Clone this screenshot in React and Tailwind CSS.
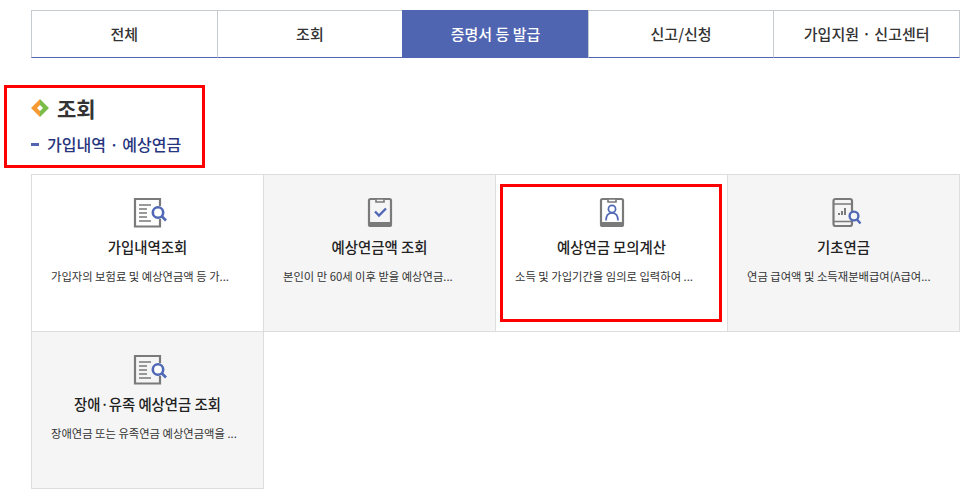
import React from 'react';

const TABS = ['전체', '조회', '증명서 등 발급', '신고/신청', '가입지원 · 신고센터'];

const CARDS = [
  { title: '가입내역조회', desc: '가입자의 보험료 및 예상연금액 등 가...', icon: 'doc' },
  { title: '예상연금액 조회', desc: '본인이 만 60세 이후 받을 예상연금...', icon: 'check' },
  { title: '예상연금 모의계산', desc: '소득 및 가입기간을 임의로 입력하여 ...', icon: 'person' },
  { title: '기초연금', desc: '연금 급여액 및 소득재분배급여(A급여...', icon: 'phone' },
  { title: '장애·유족 예상연금 조회', desc: '장애연금 또는 유족연금 예상연금액을 ...', icon: 'doc' },
];

function CardIcon({ type }) {
  const gray = '#7a7a7a';
  const blue = '#5068b5';
  return (
    <svg width="36" height="32" viewBox="0 0 36 32" fill="none" className="overflow-visible">
      {type === 'doc' && (
        <>
          <path d="M30 23v7.5H5V3h25v7" stroke={gray} strokeWidth="2.2" fill="none" />
          <path d="M9 9h12M9 13h8M9 17h8M9 21h8M9 25h12" stroke={gray} strokeWidth="1.6" />
          <circle cx="28" cy="16.5" r="5.2" stroke={blue} strokeWidth="2.6" fill="#fff" />
          <path d="M32 20.5l4 4" stroke={blue} strokeWidth="2.6" />
        </>
      )}
      {type === 'check' && (
        <>
          <rect x="7" y="3" width="22" height="27" rx="1.5" stroke={gray} strokeWidth="2.2" />
          <path d="M7 27.5h22" stroke={gray} strokeWidth="3" />
          <path d="M14 3h8v3h-8z" fill="#f5f5f5" stroke={gray} strokeWidth="1.6" />
          <path d="M13 15.5l4 4 7-7" stroke={blue} strokeWidth="2.4" />
        </>
      )}
      {type === 'person' && (
        <>
          <rect x="7" y="3" width="22" height="27" rx="1.5" stroke={gray} strokeWidth="2.2" />
          <path d="M7 27.5h22" stroke={gray} strokeWidth="3" />
          <path d="M14 3h8v3h-8z" fill="#fff" stroke={gray} strokeWidth="1.6" />
          <circle cx="18" cy="13" r="3.6" stroke={blue} strokeWidth="1.7" />
          <path d="M12 24.5c0-5 2.5-7.5 6-7.5s6 2.5 6 7.5" stroke={blue} strokeWidth="1.7" />
        </>
      )}
      {type === 'phone' && (
        <>
          <rect x="7.5" y="3" width="18.5" height="27" rx="2" stroke={gray} strokeWidth="2.2" />
          <path d="M7.5 8h18.5M7.5 25.5h18.5" stroke={gray} strokeWidth="1.6" />
          <path d="M13 19v-2M16 19v-4M19 19v-7" stroke={gray} strokeWidth="2" />
          <circle cx="28" cy="20" r="4.4" stroke={blue} strokeWidth="2.4" fill="#f5f5f5" />
          <path d="M31 23.5l3.5 4" stroke={blue} strokeWidth="2.4" />
        </>
      )}
    </svg>
  );
}

function Card({ card, shaded }) {
  return (
    <div className={`h-[158px] -mr-px -mb-px border border-[#dddddd] pt-[21px] px-[19px] ${shaded ? 'bg-[#f5f5f5]' : 'bg-white'}`}>
      <div className="flex justify-center h-8">
        <CardIcon type={card.icon} />
      </div>
      <p className="mt-[8px] text-center text-[14.4px] leading-[22px] font-medium text-[#222222] whitespace-nowrap">
        {card.title}
      </p>
      <p className="mt-[10px] text-[11.3px] leading-[16px] text-[#333333] whitespace-nowrap overflow-hidden">
        {card.desc}
      </p>
    </div>
  );
}

export default function App() {
  return (
    <div className="relative w-[978px] h-[502px] bg-white pt-[10px] pl-[31px] overflow-hidden font-['Noto_Sans_CJK_KR','Liberation_Sans',sans-serif]">
      {/* 상단 탭 */}
      <div className="flex w-[928px] h-[48px]">
        {TABS.map((tab, i) => (
          <div
            key={tab}
            className={`flex-1 -mr-px flex items-center justify-center text-[15px] font-medium border border-b-[#4f65b2] ${
              i === 2 ? 'bg-[#4f65b2] border-[#4f65b2] text-white' : 'bg-white border-[#c5cbcf] text-[#333333]'
            }`}
          >
            {tab}
          </div>
        ))}
      </div>

      {/* 제목 */}
      <div className="mt-[38px] flex items-center gap-[8px] h-[24px]">
        <svg width="18" height="18" viewBox="0 0 18 18">
          <path d="M9 0L0 9l9 9V12L6 9l3-3z" fill="#f59a32" />
          <path d="M9 0l9 9-9 9V12l3-3-3-3z" fill="#7cbd4a" />
        </svg>
        <h2 className="text-[21px] leading-[24px] font-bold text-[#333333]">조회</h2>
      </div>
      <div className="mt-[14px] flex items-center gap-[8px] h-[20px]">
        <span className="w-[8px] h-[3px] bg-[#4f65b2]" />
        <span className="text-[16px] leading-[20px] font-medium text-[#27347e]">가입내역 · 예상연금</span>
      </div>

      {/* 카드 목록 */}
      <div className="mt-[20px] grid grid-cols-4 w-[928px]">
        {CARDS.map((card, i) => (
          <Card key={card.title} card={card} shaded={i % 2 === 1 || i === 4} />
        ))}
      </div>

      {/* 빨간 표시 */}
      <div className="absolute left-[4px] top-[85px] w-[201px] h-[83px] border-[3px] border-[#ff0000]" />
      <div className="absolute left-[500px] top-[184px] w-[222px] h-[138px] border-[3px] border-[#ff0000]" />
    </div>
  );
}
